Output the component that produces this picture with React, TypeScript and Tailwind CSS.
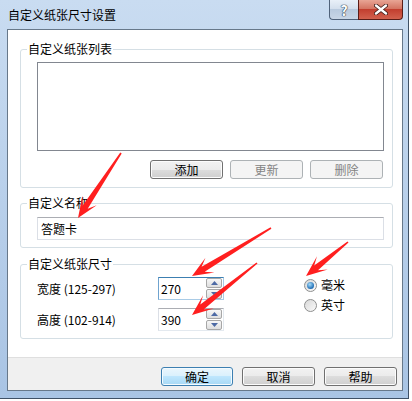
import React from "react";

type Arrow = { x1: number; y1: number; x2: number; y2: number };

const arrows: Arrow[] = [
  { x1: 121, y1: 153, x2: 78, y2: 218 },
  { x1: 271, y1: 228, x2: 192, y2: 276 },
  { x1: 257, y1: 263, x2: 192, y2: 315 },
  { x1: 348, y1: 242, x2: 306, y2: 276 },
];

function arrowPoints(a: Arrow) {
  const dx = a.x2 - a.x1;
  const dy = a.y2 - a.y1;
  const len = Math.hypot(dx, dy);
  const ux = dx / len;
  const uy = dy / len;
  const nx = -uy;
  const ny = ux;
  const p = (d: number, w: number) =>
    `${(a.x2 - ux * d + nx * w).toFixed(1)},${(a.y2 - uy * d + ny * w).toFixed(1)}`;
  return [
    p(len, 0.8),
    p(13, 3),
    p(21, 8.5),
    p(0, 0),
    p(21, -8.5),
    p(13, -3),
    p(len, -0.8),
  ].join(" ");
}

const btn =
  "flex h-[19px] w-[73px] items-center justify-center rounded-[3px] border text-[12px] leading-none";
const normalBtn = `${btn} border-[#707070] text-black bg-[linear-gradient(#f2f2f2_0%,#ebebeb_50%,#dddddd_50%,#cfcfcf_100%)] shadow-[inset_0_0_0_1px_#fcfcfc]`;
const disabledBtn = `${btn} border-[#adb2b5] bg-[#f4f4f4] text-[#838383]`;

function SpinArrow({ up }: { up: boolean }) {
  return (
    <div className="flex h-[10px] w-[16px] items-center justify-center rounded-[2px] border border-[#a7a7a7] bg-[linear-gradient(#f7f7f7,#dedede)]">
      <svg width="7" height="4" viewBox="0 0 7 4">
        <polygon
          points={up ? "0,4 7,4 3.5,0" : "0,0 7,0 3.5,4"}
          fill="#4d6aa5"
        />
      </svg>
    </div>
  );
}

function SpinBox({ value, focused }: { value: string; focused?: boolean }) {
  return (
    <div
      className={`flex h-[23px] w-[66px] border ${
        focused
          ? "border-[#a9cbe6] border-t-[#3c7fb1] border-l-[#6fa3cf]"
          : "border-[#e3e9ef] border-t-[#abadb3] border-l-[#dbdfe6]"
      } bg-white`}
    >
      <div className="flex flex-1 items-center pl-[2px] text-[12px] text-black">
        {value}
      </div>
      <div className="flex w-[17px] flex-col justify-center gap-[1px] pr-[1px]">
        <SpinArrow up />
        <SpinArrow up={false} />
      </div>
    </div>
  );
}

function Radio({ label, checked }: { label: string; checked?: boolean }) {
  return (
    <div className="flex h-[20px] items-center gap-[4px]">
      <div className="flex h-[13px] w-[13px] items-center justify-center rounded-full border border-[#8e8f8f] bg-[linear-gradient(135deg,#d8d8d8,#fafafa)]">
        {checked && (
          <div className="h-[7px] w-[7px] rounded-full bg-[radial-gradient(circle_at_40%_35%,#a6dcfa,#1f6db4_70%)]" />
        )}
      </div>
      <span className="text-[12px] text-black">{label}</span>
    </div>
  );
}

function Group({
  title,
  className,
  children,
}: {
  title: string;
  className: string;
  children: React.ReactNode;
}) {
  return (
    <fieldset
      className={`w-[373px] rounded-[3px] border border-[#d5dfe5] p-0 ${className}`}
    >
      <legend className="ml-[6px] px-[1px] text-[12px] leading-4 text-black">
        {title}
      </legend>
      {children}
    </fieldset>
  );
}

export default function App() {
  return (
    <div className="relative h-[401px] w-[412px] overflow-hidden bg-white font-['Noto_Sans_CJK_SC',sans-serif]">
      <div className="flex h-[399px] w-[409px] flex-col border-r border-b border-[#3f5166] bg-[linear-gradient(#c9dcf1,#b5cde9_60%,#a9c4e4)]">
        {/* title bar */}
        <div className="flex h-[29px] items-start">
          <div className="ml-[8px] mt-[7px] text-[12px] leading-4 text-black">
            自定义纸张尺寸设置
          </div>
          <div className="ml-auto mr-[5px] flex">
            <div className="flex h-[20px] w-[29px] items-center justify-center rounded-bl-[4px] border border-r-0 border-t-0 border-[#4f627a] bg-[linear-gradient(#e9f0f8,#d2deec_50%,#b9cade_50%,#c8d6e6)]">
              <span className="text-[14px] font-bold leading-none text-white [text-shadow:0_0_1px_#2b3848,0_0_1px_#2b3848,0_0_1px_#2b3848]">
                ?
              </span>
            </div>
            <div className="flex h-[20px] w-[45px] items-center justify-center rounded-br-[4px] border border-t-0 border-[#5a1d17] bg-[linear-gradient(#e8a595,#d47563_45%,#c23f2f_50%,#d2614e)]">
              <svg width="14" height="11" viewBox="0 0 14 11">
                <path
                  d="M2 1.5 L12 9.5 M12 1.5 L2 9.5"
                  stroke="#3b1a16"
                  strokeWidth="4"
                  strokeLinecap="round"
                />
                <path
                  d="M2 1.5 L12 9.5 M12 1.5 L2 9.5"
                  stroke="#ffffff"
                  strokeWidth="2.4"
                  strokeLinecap="round"
                />
              </svg>
            </div>
          </div>
        </div>

        {/* client area */}
        <div className="ml-[7px] flex w-[396px] flex-col border border-[#67788a] bg-white">
          <div className="flex h-[327px] flex-col pl-[12px]">
            <Group title="自定义纸张列表" className="mt-[11px]">
              <div className="flex flex-col pl-[16px] pr-[8px] pt-[5px] pb-[8px]">
                <div className="h-[89px] w-[347px] border border-[#828790] bg-white" />
                <div className="mt-[9px] flex justify-end gap-[7px] pr-[1px]">
                  <div className={normalBtn}>添加</div>
                  <div className={disabledBtn}>更新</div>
                  <div className={disabledBtn}>删除</div>
                </div>
              </div>
            </Group>

            <Group title="自定义名称" className="mt-[7px]">
              <div className="pl-[16px] pr-[8px] pt-[6px] pb-[7px]">
                <div className="flex h-[23px] w-[347px] items-center border border-[#dbdfe6] border-t-[#abadb3] bg-white pl-[3px] text-[12px] text-black">
                  答题卡
                </div>
              </div>
            </Group>

            <Group title="自定义纸张尺寸" className="mt-[8px]">
              <div className="flex items-start pl-[16px] pt-[5px] pb-[7px]">
                <div className="flex flex-col gap-[8px]">
                  <div className="flex items-center">
                    <span className="w-[121px] text-[12px] text-black">
                      宽度 (125-297)
                    </span>
                    <SpinBox value="270" focused />
                  </div>
                  <div className="flex items-center">
                    <span className="w-[121px] text-[12px] text-black">
                      高度 (102-914)
                    </span>
                    <SpinBox value="390" />
                  </div>
                </div>
                <div className="ml-[80px] -mt-[2px] flex flex-col">
                  <Radio label="毫米" checked />
                  <Radio label="英寸" />
                </div>
              </div>
            </Group>
          </div>

          <div className="flex h-[33px] justify-end gap-[9px] border-t border-[#dfdfdf] bg-[#f0f0f0] pt-[9px] pr-[5px]">
            <div className="flex h-[19px] w-[72px] items-center justify-center rounded-[3px] border border-[#3c7fb1] bg-[linear-gradient(#eaf6fd_0%,#d9f0fc_50%,#bee6fd_50%,#a7d9f5_100%)] text-[12px] leading-none text-black shadow-[inset_0_0_0_1px_#f4fbff]">
              确定
            </div>
            <div className={`${normalBtn} w-[72px]`}>取消</div>
            <div className={`${normalBtn} w-[72px]`}>帮助</div>
          </div>
        </div>
      </div>

      {/* red annotation arrows */}
      <svg
        className="pointer-events-none absolute left-0 top-0"
        width="412"
        height="401"
        viewBox="0 0 412 401"
      >
        {arrows.map((a, i) => (
          <polygon key={i} points={arrowPoints(a)} fill="#ff1f1f" />
        ))}
      </svg>
    </div>
  );
}
